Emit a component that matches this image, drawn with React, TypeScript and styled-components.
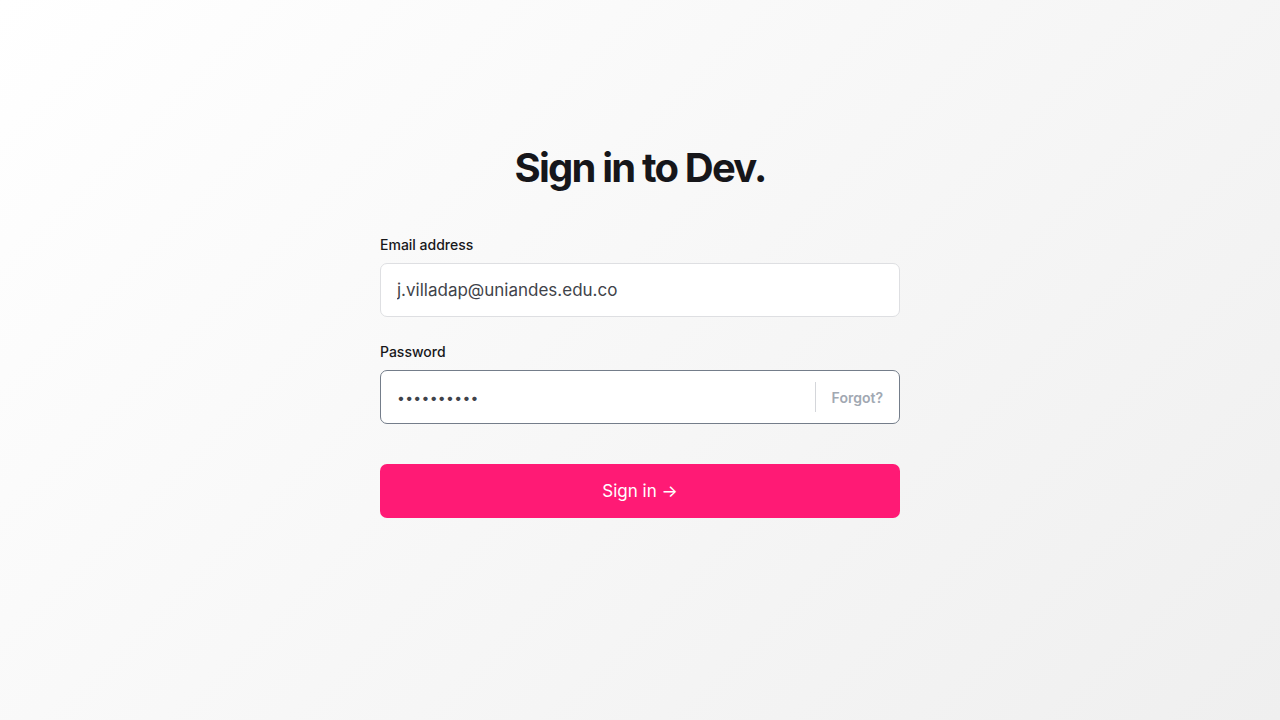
import React from 'react';
import styled, { createGlobalStyle } from 'styled-components';

const GlobalStyle = createGlobalStyle`
  html, body { margin: 0; padding: 0; }
  body {
    font-family: Inter, "Noto Sans", sans-serif;
    -webkit-font-smoothing: antialiased;
  }
  * { box-sizing: border-box; }
`;

const Page = styled.div`
  min-height: 100vh;
  background: linear-gradient(135deg, #ffffff 0%, #efefef 100%);
  display: flex;
  justify-content: center;
  padding-top: 143px;
`;

const Form = styled.form`
  width: 520px;
  display: flex;
  flex-direction: column;
`;

const Title = styled.h1`
  margin: 0 0 42px;
  text-align: center;
  font-size: 40px;
  line-height: 50px;
  font-weight: 700;
  letter-spacing: -1.8px;
  color: #16161a;
`;

const Field = styled.div`
  display: flex;
  flex-direction: column;
  margin-bottom: ${(p: { gap?: number }) => p.gap ?? 25}px;
`;

const Label = styled.label`
  font-size: 14px;
  line-height: 20px;
  font-weight: 500;
  color: #18181b;
  margin-bottom: 8px;
`;

const InputBox = styled.div<{ $focused?: boolean }>`
  height: 54px;
  display: flex;
  align-items: center;
  background: #ffffff;
  border: 1px solid ${(p) => (p.$focused ? '#747d8a' : '#dedfe2')};
  border-radius: 7px;
  padding: 0 16px;
`;

const Input = styled.input`
  flex: 1;
  border: none;
  outline: none;
  background: transparent;
  font-family: inherit;
  font-size: 17px;
  color: #3f434a;
  padding: 0;
  &[type='password'] {
    letter-spacing: 0.3px;
    font-size: 14px;
  }
`;

const Divider = styled.span`
  width: 1px;
  height: 30px;
  background: #d4d6da;
  margin: 0 16px 0 12px;
`;

const Forgot = styled.a`
  font-size: 14px;
  font-weight: 600;
  color: #a1a8b2;
  text-decoration: none;
`;

const Button = styled.button`
  height: 54px;
  border: none;
  border-radius: 7px;
  background: #ff1a75;
  color: #ffffff;
  font-family: inherit;
  font-size: 17px;
  font-weight: 400;
  cursor: pointer;
`;

export default function App() {
  return (
    <>
      <GlobalStyle />
      <Page>
        <Form onSubmit={(e) => e.preventDefault()}>
          <Title>Sign in to Dev.</Title>
          <Field>
            <Label>Email address</Label>
            <InputBox>
              <Input type="email" defaultValue="j.villadap@uniandes.edu.co" />
            </InputBox>
          </Field>
          <Field gap={40}>
            <Label>Password</Label>
            <InputBox $focused>
              <Input type="password" defaultValue="1234567890" />
              <Divider />
              <Forgot href="#">Forgot?</Forgot>
            </InputBox>
          </Field>
          <Button type="submit">Sign in →</Button>
        </Form>
      </Page>
    </>
  );
}
